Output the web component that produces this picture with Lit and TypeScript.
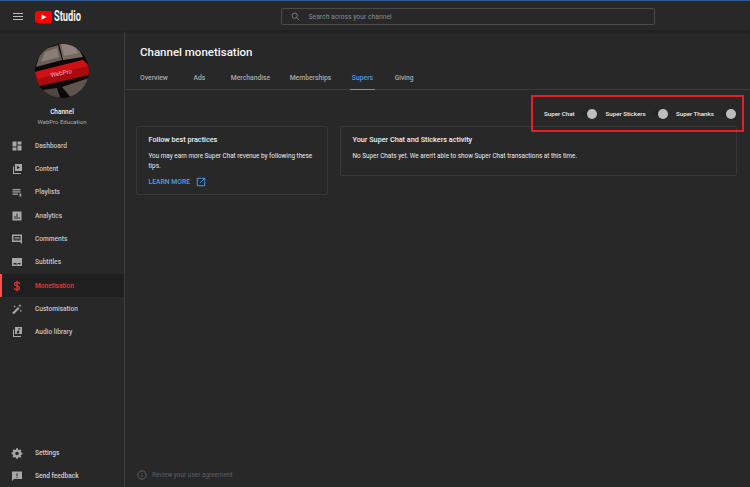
import { LitElement, html, css, svg } from "lit";
import { customElement } from "lit/decorators.js";

const icons: Record<string, unknown> = {
  dashboard: svg`<path d="M3 3h8v10H3zM13 3h8v6h-8zM13 11h8v10h-8zM3 15h8v6H3z"/>`,
  content: svg`<path d="M8 2h14v14H8z"/><path d="M12 5.500v7l6-3.500z" fill="#282828"/><path d="M4 7h2v13h14v2H4z"/>`,
  playlists: svg`<path d="M3 6h16v2.400H3zM3 10.500h16v2.400H3zM3 15h11v2.400H3z"/><path d="M17 15h3.500v6H17z"/>`,
  analytics: svg`<path d="M3 3h18v18H3z"/><path d="M7 12h2v6H7zM11 7h2v11h-2zM15 14h2v4h-2z" fill="#282828"/>`,
  comments: svg`<path fill-rule="evenodd" d="M2 3h20v19l-4-4H2zM5 6v9h14V6z"/><path d="M7 8h10v1.500H7zM7 11h10v1.500H7z"/>`,
  subtitles: svg`<path d="M2 4h20v16H2z"/><path d="M5 14h6v2H5zM13 14h6v2h-6zM5 17h9v1H5zM16 17h3v1h-3z" fill="#282828"/>`,
  money: svg`<path fill="none" stroke="currentColor" stroke-width="2.300" d="M17 8c0-2.400-2.200-3.600-5-3.600S7 5.700 7 8c0 5 10 3 10 8.200 0 2.300-2.200 3.400-5 3.400s-5-1.200-5-3.600"/><path d="M10.800 1.500h2.400v21h-2.400z"/>`,
  wand: svg`<path d="M2.500 19.500 14 8l3 3L5.500 22.500zM18 2l1 2.500L21.500 5.500 19 6.500 18 9l-1-2.500L14.500 5.500 17 4.500zM7.500 4l.8 2 2 .8-2 .8-.8 2-.8-2-2-.8 2-.8zM19.500 13l.8 2 2 .8-2 .8-.8 2-.8-2-2-.8 2-.8z"/>`,
  audio: svg`<path d="M8 2h14v14H8z"/><path d="M15 4.500h3.500v2H16.500v6a2.500 2.500 0 1 1-1.500-2.300z" fill="#282828"/><path d="M4 7h2v13h14v2H4z"/>`,
  settings: svg`<path fill-rule="evenodd" d="M10 2h4l.5 3 1.800.8L19 4.200l2.800 2.800-1.600 2.700.8 1.800 3 .5v4l-3 .5-.8 1.800 1.600 2.700L19 23l-2.700-1.600-1.800.8-.5 3h-4l-.5-3-1.800-.8L5 23l-2.800-2.800 1.600-2.700-.8-1.800-3-.5v-4l3-.5.8-1.800L2.200 7 5 4.200l2.700 1.600 1.800-.8zM12 9.500a4 4 0 1 0 0 8 4 4 0 0 0 0-8z" transform="translate(1.200 .8) scale(.9)"/>`,
  feedback: svg`<path d="M2 3h20v15H6l-4 4z"/><path d="M11 6.500h2v6h-2zM11 14h2v2h-2z" fill="#282828"/>`,
};

const topNav = [
  ["dashboard", "Dashboard"], ["content", "Content"], ["playlists", "Playlists"],
  ["analytics", "Analytics"], ["comments", "Comments"], ["subtitles", "Subtitles"],
  ["money", "Monetisation"], ["wand", "Customisation"], ["audio", "Audio library"],
];
const bottomNav = [["settings", "Settings"], ["feedback", "Send feedback"]];
const tabs = ["Overview", "Ads", "Merchandise", "Memberships", "Supers", "Giving"];
const toggles = ["Super Chat", "Super Stickers", "Super Thanks"];

@customElement("app-root")
export class AppRoot extends LitElement {
  static styles = css`
    :host { display: block; width: 750px; height: 487px; overflow: hidden; background: #282828; color: #fff; font-family: Roboto, "Liberation Sans", sans-serif; position: relative; }
    .page { display: flex; flex-direction: column; height: 487px; }
    header { height: 31px; flex: none; box-sizing: border-box; padding-top: 2px; border-top: 1px solid #2f5a92; border-bottom: 1px solid #222; display: flex; align-items: center; position: relative; box-shadow: 0 1px 2px rgba(0,0,0,.25); }
    .menu { width: 10px; height: 7px; margin-left: 13px; display: flex; flex-direction: column; justify-content: space-between; }
    .menu i { display: block; height: 1px; background: #bbb; }
    .logo { display: flex; align-items: center; margin-left: 12px; }
    .studio { font: 700 14.500px/14px Roboto, sans-serif; color: #f1f1f1; transform: scaleX(.64); transform-origin: left center; margin-left: 2px; width: 28px; }
    .search { width: 374px; height: 17px; box-sizing: border-box; border: 1px solid #4a4a4a; border-radius: 2px; margin-left: 198.500px; display: flex; align-items: center; padding-left: 9px; gap: 9px; font-size: 6.800px; color: #8a8a8a; }
    .body { flex: 1; display: flex; min-height: 0; }
    aside { width: 125px; flex: none; box-sizing: border-box; border-right: 1px solid #3a3a3a; display: flex; flex-direction: column; }
    .avatar { align-self: center; margin-top: 13px; width: 54px; height: 54px; flex: none; }
    .chan { text-align: center; font-size: 6.500px; font-weight: 500; margin-top: 9px; line-height: 10px; color: #f4f4f4; }
    .edu { text-align: center; font-size: 6px; color: #aaa; line-height: 10px; }
    nav { margin-top: 7px; display: flex; flex-direction: column; }
    nav.bottom { margin-top: auto; margin-bottom: -1px; }
    .item { height: 23.350px; flex: none; display: flex; align-items: center; box-sizing: border-box; padding-left: 11px; gap: 12px; font-size: 6.600px; color: #c4c4c4; font-weight: 500; }
    .item svg { width: 12px; height: 12px; fill: #a8a8a8; color: #a8a8a8; flex: none; }
    .item.active { background: #1f1f1f; color: #e53935; box-shadow: inset 2px 0 0 #ff4e45; }
    .item.active svg { fill: #e53935; color: #e53935; }
    nav.bottom .item { color: #d0d0d0; }
    main { flex: 1; min-width: 0; display: flex; flex-direction: column; }
    h1 { margin: 14px 0 0 15px; font-size: 11.500px; line-height: 14px; font-weight: 500; color: #f6f6f6; }
    .tabs { display: flex; height: 25px; margin-top: 6px; padding-left: 15px; box-sizing: border-box; border-bottom: 1px solid #3a3a3a; gap: 20.500px; }
    .tab { font-size: 6.800px; font-weight: 500; color: #a8a8a8; padding-top: 9px; height: 25px; box-sizing: border-box; position: relative; line-height: 9px; }
    .tab:nth-child(-n+2) { margin-right: 5px; }
    .tab:nth-child(3) { margin-right: -1px; }
    .tab:nth-child(5) { margin-right: 1px; }
    .tab.on { color: #4a9bea; }
    .tab.on::after { content: ""; position: absolute; left: -1.500px; right: -1.500px; bottom: 0; height: 1.500px; background: #4a9bea; }
    .cards { display: flex; align-items: flex-start; gap: 12px; margin: 36px 13px 0 11px; }
    .card { box-sizing: border-box; border: 1px solid #383838; border-radius: 2px; padding: 8px 11.500px; }
    .card.a { width: 192px; height: 69px; flex: none; }
    .card.b { flex: 1; height: 50px; }
    h2 { margin: 0; font-size: 7.250px; line-height: 10px; font-weight: 500; color: #f1f1f1; }
    p { margin: 6px 0 0; font-size: 6.350px; line-height: 10px; color: #ececec; }
    .learn { display: flex; align-items: center; gap: 5.500px; margin-top: 6px; color: #4d9fec; font-size: 6.800px; font-weight: 500; line-height: 10px; }
    .learn svg { width: 10px; height: 10px; }
    .foot { margin-top: auto; margin-left: 12px; margin-bottom: 7px; display: flex; align-items: center; gap: 5px; font-size: 6.450px; color: #5a5f66; line-height: 10px; }
    .foot svg { width: 10px; height: 10px; }
    .mark { position: absolute; left: 531px; top: 95px; width: 213px; height: 37px; box-sizing: border-box; border: 2px solid #ed1c24; display: flex; align-items: center; padding-left: 11px; gap: 8.500px; }
    .tog { display: flex; align-items: center; font-size: 6.200px; font-weight: 500; color: #eee; }
    .tog:nth-child(1) { width: 53px; } .tog:nth-child(2) { width: 62px; } .tog:nth-child(3) { width: 60px; }
    .switch { position: relative; margin-left: auto; width: 16px; height: 6px; border-radius: 3px; background: #232323; }
    .switch::after { content: ""; position: absolute; right: 0; top: -2px; width: 10px; height: 10px; border-radius: 50%; background: #bdbdbd; }
  `;

  private navItem([key, label]: string[]) {
    return html`<div class="item ${key === "money" ? "active" : ""}"><svg viewBox="0 0 24 24">${icons[key]}</svg><span>${label}</span></div>`;
  }

  render() {
    return html`
      <div class="page">
        <header>
          <div class="menu"><i></i><i></i><i></i></div>
          <div class="logo">
            <svg width="17" height="12" viewBox="0 0 17 12"><rect width="17" height="12" rx="3" fill="#f00"/><path d="M6.500 3.300v5.400L11.300 6z" fill="#fff"/></svg>
            <span class="studio">Studio</span>
          </div>
          <div class="search">
            <svg width="9" height="9" viewBox="0 0 24 24" fill="none" stroke="#8a8a8a" stroke-width="2.200"><circle cx="10" cy="10" r="7"/><path d="m15 15 7 7"/></svg>
            <span>Search across your channel</span>
          </div>
        </header>
        <div class="body">
          <aside>
            <svg class="avatar" viewBox="0 0 54 54">
              <defs><clipPath id="c"><circle cx="27" cy="27" r="27"/></clipPath></defs>
              <g clip-path="url(#c)">
                <rect width="54" height="54" fill="#0c0908"/>
                <path d="M6 6 23 1 27 16 1 23z" fill="#6a5e58"/>
                <path d="M10 8 22 4 24 13 6 18z" fill="#8a7d76"/>
                <path d="M24 -1 42 2 48 13 28 16z" fill="#75695f"/>
                <path d="M26 -1 40 1 43 9 29 12z" fill="#8f837b"/>
                <path d="M0 28 48 16 54 21 54 31 5 42 0 38z" fill="#a80b10"/>
                <path d="M0 28 48 16 52 22 3 35z" fill="#cf1116"/>
                <text x="15" y="31" font-family="Roboto, sans-serif" font-size="6.200" fill="#eab0b0" transform="rotate(-11 27 27)">WebPro</text>
                <path d="M27 43 54 34 54 46 38 56z" fill="#5f554e"/>
                <path d="M8 46 22 44 26 56 14 56z" fill="#4f463f"/>
              </g>
            </svg>
            <div class="chan">Channel</div>
            <div class="edu">WebPro Education</div>
            <nav>${topNav.map((n) => this.navItem(n))}</nav>
            <nav class="bottom">${bottomNav.map((n) => this.navItem(n))}</nav>
          </aside>
          <main>
            <h1>Channel monetisation</h1>
            <div class="tabs">${tabs.map((t) => html`<div class="tab ${t === "Supers" ? "on" : ""}">${t}</div>`)}</div>
            <div class="cards">
              <section class="card a">
                <h2>Follow best practices</h2>
                <p>You may earn more Super Chat revenue by following these tips.</p>
                <div class="learn">LEARN MORE
                  <svg viewBox="0 0 24 24" fill="none" stroke="#4a9bea" stroke-width="2.400"><path d="M13 3H3v18h18V11M10 14 21 3M14 3h7v7"/></svg>
                </div>
              </section>
              <section class="card b">
                <h2>Your Super Chat and Stickers activity</h2>
                <p>No Super Chats yet. We aren't able to show Super Chat transactions at this time.</p>
              </section>
            </div>
            <div class="foot">
              <svg viewBox="0 0 24 24" fill="none" stroke="#6a6a6a" stroke-width="2"><circle cx="12" cy="12" r="10"/><path d="M12 11v6M12 7v2"/></svg>
              <span>Review your user agreement</span>
            </div>
          </main>
        </div>
      </div>
      <div class="mark">${toggles.map((t) => html`<div class="tog"><span>${t}</span><div class="switch"></div></div>`)}</div>
    `;
  }
}
